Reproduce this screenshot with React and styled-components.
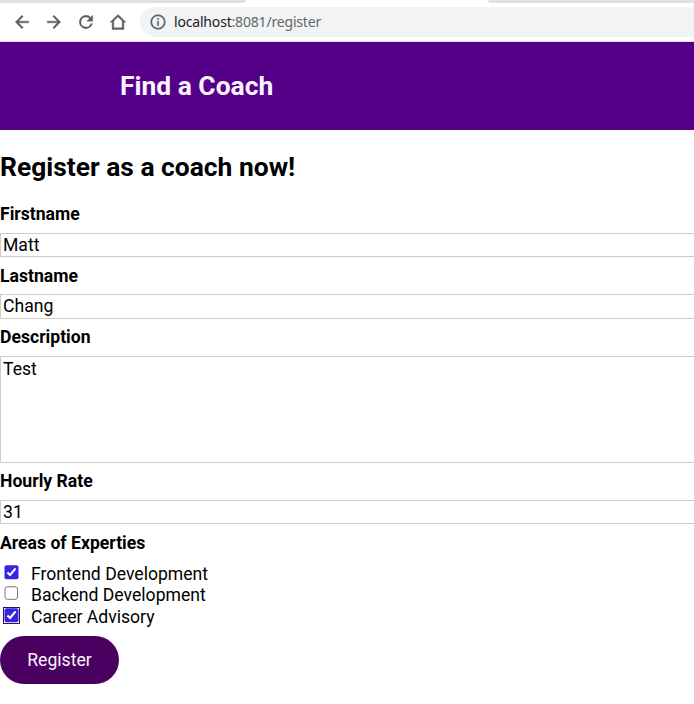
import React from "react";
import styled, { createGlobalStyle } from "styled-components";

const GlobalStyle = createGlobalStyle`
  * { box-sizing: border-box; }
  html, body { margin: 0; background: #fff; overflow: hidden; }
  body { font-family: Roboto, sans-serif; font-size: 17.6px; color: #000; }
`;

const Page = styled.div`
  height: 704px;
  overflow: hidden;
`;

const TabStrip = styled.div`
  display: flex;
  justify-content: space-between;
  height: 3px;
`;

const TabEdge = styled.div`
  width: ${(p) => p.$width}px;
  background: #dee1e6;
  border-radius: ${(p) => p.$radius};
`;

const Toolbar = styled.div`
  display: flex;
  align-items: center;
  height: 39px;
  padding-left: 12px;
  border-bottom: 1px solid #eadcf3;
`;

const NavIcon = styled.svg`
  flex: none;
  width: 20px;
  height: 20px;
  margin-right: 12px;
  fill: #5a5d61;
  stroke: #5a5d61;
  stroke-width: 0.5;
`;

const AddressBar = styled.div`
  display: flex;
  align-items: center;
  flex: 1;
  height: 30px;
  padding-left: 9px;
  background: #f1f3f4;
  border-radius: 15px 0 0 15px;
  font: 14px/20px "Noto Sans", sans-serif;
  letter-spacing: -0.18px;
  color: #63666a;
`;

const InfoIcon = styled.svg`
  width: 18px;
  height: 18px;
  margin-right: 7px;
  fill: #5f6368;
  stroke: #5f6368;
  stroke-width: 0.3;
`;

const Host = styled.span`
  color: #202124;
`;

const Header = styled.header`
  display: flex;
  align-items: center;
  height: 88px;
  padding-left: 120px;
  background: #550088;
`;

const Brand = styled.h1`
  margin: 0;
  font-size: 26.4px;
  line-height: 31px;
  font-weight: 700;
  color: #fbf3ff;
`;

const Title = styled.h2`
  margin: 22px 0 21px;
  font-size: 26.4px;
  line-height: 31px;
  font-weight: 700;
`;

const Field = styled.div`
  display: flex;
  flex-direction: column;
  margin-bottom: 8px;
  width: 720px;
`;

const Label = styled.label`
  height: ${(p) => (p.$low ? 22 : 21)}px;
  padding-top: ${(p) => (p.$low ? 1 : 0)}px;
  margin-bottom: ${(p) => (p.$low ? 7 : 8)}px;
  font-weight: 700;
  line-height: 21px;
`;

const inputStyles = `
  width: 100%;
  margin: 0;
  border: 1px solid #ccc;
  border-radius: 0;
  background: #fff;
  color: #000;
  font: inherit;
  outline: none;
`;

const TextInput = styled.input`
  ${inputStyles}
  height: ${(p) => p.$height}px;
  padding: 0 2px ${(p) => p.$height - 24}px;
`;

const TextArea = styled.textarea`
  ${inputStyles}
  height: 107px;
  padding: 2px;
  line-height: 21px;
  resize: none;
`;

const Options = styled.div`
  padding-top: 3px;
`;

const Option = styled.label`
  display: flex;
  align-items: flex-start;
  height: 21.4px;
  line-height: 21px;
`;

const CheckIcon = styled.svg`
  width: 18px;
  height: 18px;
  margin: -1px 11px 0 2px;
`;

const SubmitButton = styled.button`
  display: block;
  width: 119px;
  height: 48px;
  margin-top: 7.8px;
  padding: 0;
  border: 0;
  border-radius: 24px;
  background: #4a0060;
  color: #fbf3ff;
  font: inherit;
`;

const Check = ({ checked, focused }) => (
  <CheckIcon viewBox="0 0 18 18">
    {focused && <rect x="1.5" y="1.5" width="16" height="16" fill="#fff" stroke="#3d0860" />}
    {checked ? (
      <>
        <rect x="2.5" y="2.2" width="14" height="14" rx="2" fill="#3425e6" />
        <path d="M5.4 9.4 8.1 12l5.5-6.6" fill="none" stroke="#fff" strokeWidth="2.1" />
      </>
    ) : (
      <rect x="3" y="2.8" width="12.5" height="12.5" rx="2.3" fill="#fff" stroke="#777" />
    )}
  </CheckIcon>
);

const navPaths = [
  "M20 11H7.83l5.59-5.59L12 4l-8 8 8 8 1.41-1.41L7.83 13H20v-2z",
  "M12 4l-1.41 1.41L16.17 11H4v2h12.17l-5.58 5.59L12 20l8-8z",
  "M17.65 6.35A7.96 7.96 0 0 0 12 4a8 8 0 1 0 7.73 10h-2.08A6 6 0 1 1 12 6c1.66 0 3.14.69 4.22 1.78L13 11h7V4l-2.35 2.35z",
  "M12 3 2.5 12.2H5V21h14v-8.8h2.5L12 3zm0 2.8 5 4.9V19H7v-8.3l5-4.9z",
];

const areas = [
  { name: "Frontend Development", checked: true },
  { name: "Backend Development" },
  { name: "Career Advisory", checked: true, focused: true },
];

export default function App() {
  return (
    <Page>
      <GlobalStyle />
      <TabStrip>
        <TabEdge $width={246} $radius="0 0 8px 0" />
        <TabEdge $width={206} $radius="0 0 0 8px" />
      </TabStrip>
      <Toolbar>
        {navPaths.map((d) => (
          <NavIcon key={d} viewBox="0 0 24 24">
            <path d={d} />
          </NavIcon>
        ))}
        <AddressBar>
          <InfoIcon viewBox="0 0 24 24">
            <path d="M11 17h2v-6h-2v6zm1-15a10 10 0 1 0 0 20 10 10 0 0 0 0-20zm0 18a8 8 0 1 1 0-16 8 8 0 0 1 0 16zM11 9h2V7h-2v2z" />
          </InfoIcon>
          <Host>localhost</Host>:8081/register
        </AddressBar>
      </Toolbar>
      <Header>
        <Brand>Find a Coach</Brand>
      </Header>
      <Title>Register as a coach now!</Title>
      <form>
        <Field>
          <Label htmlFor="first">Firstname</Label>
          <TextInput id="first" $height={24} defaultValue="Matt" />
        </Field>
        <Field>
          <Label htmlFor="last" $low>Lastname</Label>
          <TextInput id="last" $height={25} defaultValue="Chang" />
        </Field>
        <Field>
          <Label htmlFor="description">Description</Label>
          <TextArea id="description" defaultValue="Test" />
        </Field>
        <Field>
          <Label htmlFor="rate">Hourly Rate</Label>
          <TextInput id="rate" $height={24} defaultValue="31" />
        </Field>
        <Label as="div" $low>Areas of Experties</Label>
        <Options>
          {areas.map((area) => (
            <Option key={area.name}>
              <Check checked={area.checked} focused={area.focused} />
              {area.name}
            </Option>
          ))}
        </Options>
        <SubmitButton type="button">Register</SubmitButton>
      </form>
    </Page>
  );
}
